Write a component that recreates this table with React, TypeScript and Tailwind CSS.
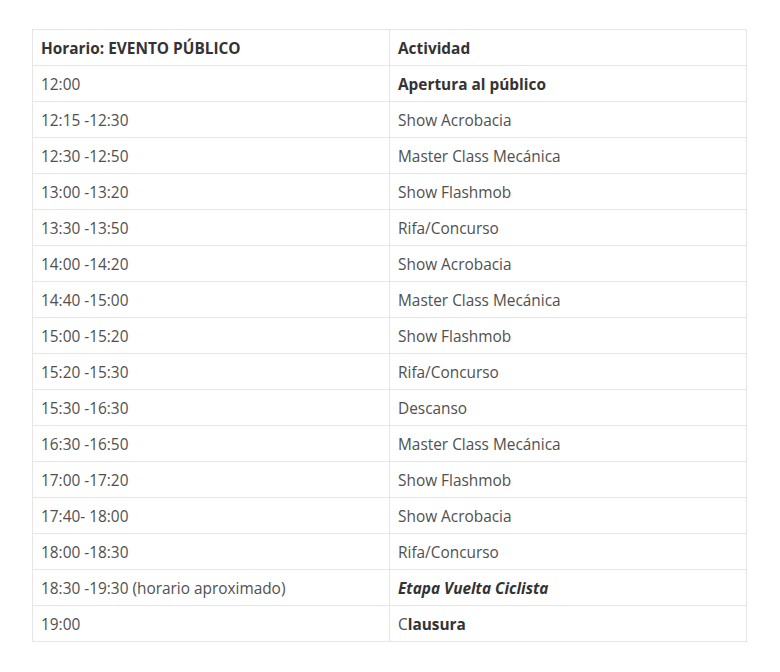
import React from "react";

type Row = { time: string; act: React.ReactNode };

const rows: Row[] = [
  { time: "12:00", act: <strong className="font-bold text-[#333]">Apertura al público</strong> },
  { time: "12:15 -12:30", act: "Show Acrobacia" },
  { time: "12:30 -12:50", act: "Master Class Mecánica" },
  { time: "13:00 -13:20", act: "Show Flashmob" },
  { time: "13:30 -13:50", act: "Rifa/Concurso" },
  { time: "14:00 -14:20", act: "Show Acrobacia" },
  { time: "14:40 -15:00", act: "Master Class Mecánica" },
  { time: "15:00 -15:20", act: "Show Flashmob" },
  { time: "15:20 -15:30", act: "Rifa/Concurso" },
  { time: "15:30 -16:30", act: "Descanso" },
  { time: "16:30 -16:50", act: "Master Class Mecánica" },
  { time: "17:00 -17:20", act: "Show Flashmob" },
  { time: "17:40- 18:00", act: "Show Acrobacia" },
  { time: "18:00 -18:30", act: "Rifa/Concurso" },
  {
    time: "18:30 -19:30 (horario aproximado)",
    act: <strong className="font-bold italic text-[#333]">Etapa Vuelta Ciclista</strong>,
  },
  {
    time: "19:00",
    act: (
      <>
        C<strong className="font-bold text-[#333]">lausura</strong>
      </>
    ),
  },
];

export default function App() {
  return (
    <div className="min-h-[672px] w-[780px] bg-white pt-[29px] pl-[32px] font-['Open_Sans',sans-serif] text-[15.4px] text-[#505050]">
      <table className="w-[715px] table-fixed border-collapse">
        <thead>
          <tr className="h-[36px]">
            <th className="w-[357px] border border-[#e6e6e6] px-[8px] pt-[2px] pb-0 text-left align-middle font-bold text-[#333]">
              Horario: EVENTO PÚBLICO
            </th>
            <th className="border border-[#e6e6e6] px-[8px] pt-[2px] pb-0 text-left align-middle font-bold text-[#333]">
              Actividad
            </th>
          </tr>
        </thead>
        <tbody>
          {rows.map((r, i) => (
            <tr key={i} className="h-[36px]">
              <td className="border border-[#e6e6e6] px-[8px] pt-[2px] pb-0 align-middle">{r.time}</td>
              <td className="border border-[#e6e6e6] px-[8px] pt-[2px] pb-0 align-middle">{r.act}</td>
            </tr>
          ))}
        </tbody>
      </table>
    </div>
  );
}
